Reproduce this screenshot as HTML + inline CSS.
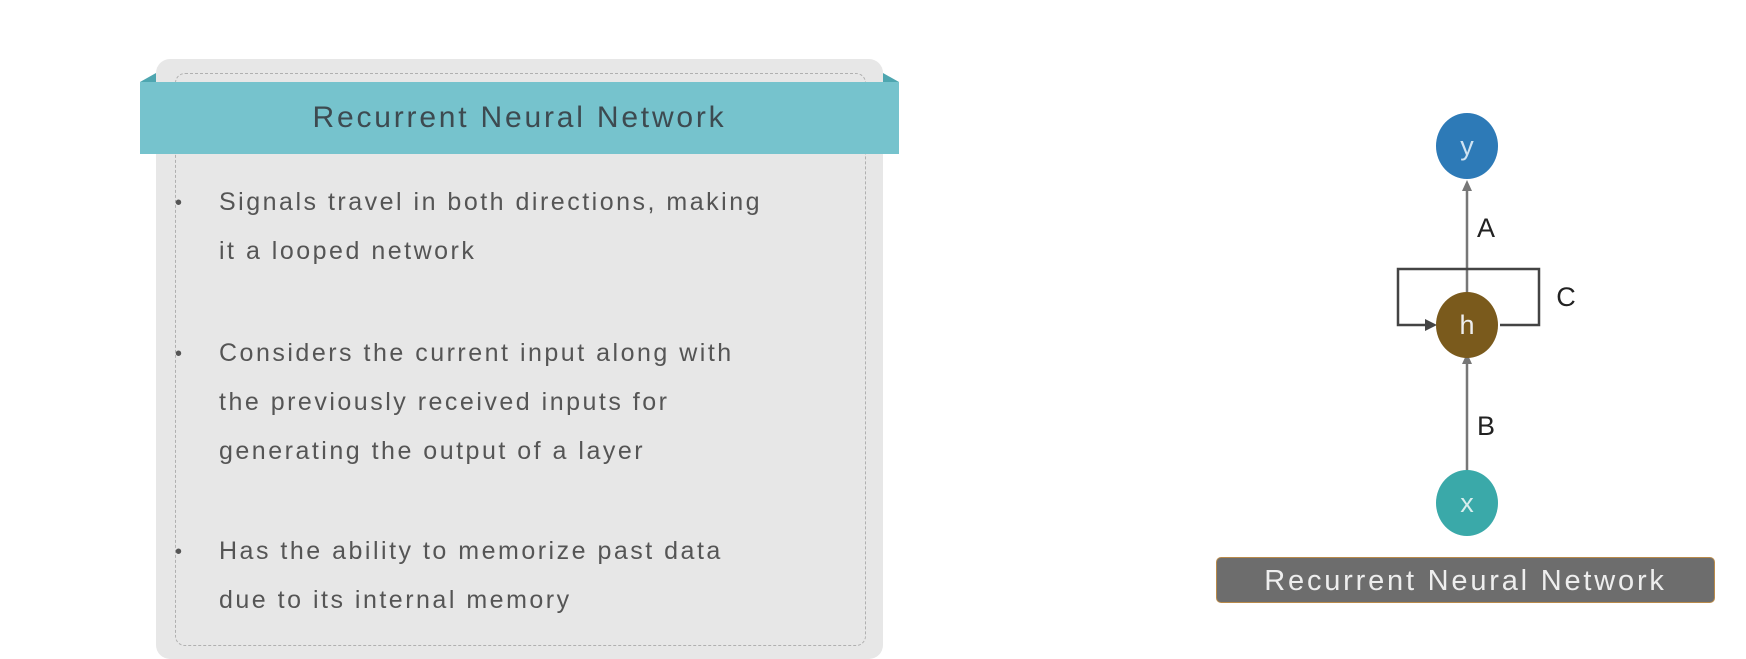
<!DOCTYPE html>
<html><head><style>
body{margin:0;width:1746px;height:652px;background:#fff;position:relative;overflow:hidden;font-family:"Liberation Sans",sans-serif}
.card{position:absolute;left:156px;top:59px;width:727px;height:600px;background:#e7e7e7;border-radius:14px}
.dash{position:absolute;left:175px;top:73px;width:689px;height:571px;border:1.5px dashed #b0b0b0;border-radius:10px}
.fl{position:absolute;left:140px;top:73px;width:0;height:0;border-left:16px solid transparent;border-bottom:9px solid #4ea6b0}
.fr{position:absolute;left:883px;top:73px;width:0;height:0;border-right:16px solid transparent;border-bottom:9px solid #4ea6b0}
.hdr{position:absolute;left:140px;top:82px;width:759px;height:72px;background:#76c3cd;color:#3d4a50;font-size:30px;letter-spacing:2.8px;text-align:center;line-height:72px}
.t{position:absolute;left:219px;color:#555;font-size:25px;letter-spacing:2.5px;line-height:49px}
.b{position:absolute;left:175px;color:#555;font-size:20px}
.lab{position:absolute;left:1216px;top:557px;width:499px;height:46px;background:#6d6d6d;border:1.5px solid #b98a4a;border-radius:5px;color:#eee;font-size:29px;letter-spacing:2.8px;text-align:center;line-height:46px;box-sizing:border-box}
</style></head><body>
<div class="card"></div>
<div class="dash"></div>
<div class="fl"></div><div class="fr"></div>
<div class="hdr">Recurrent Neural Network</div>
<div class="b" style="top:192px">•</div>
<div class="t" style="top:178px">Signals travel in both directions, making<br>it a looped network</div>
<div class="b" style="top:343px">•</div>
<div class="t" style="top:329px">Considers the current input along with<br>the previously received inputs for<br>generating the output of a layer</div>
<div class="b" style="top:541px">•</div>
<div class="t" style="top:527px">Has the ability to memorize past data<br>due to its internal memory</div>
<svg width="1746" height="652" style="position:absolute;left:0;top:0">
<g stroke="#777" stroke-width="2.5" fill="none">
<line x1="1467" y1="190" x2="1467" y2="294"/>
<line x1="1467" y1="362" x2="1467" y2="472"/>
</g>
<polygon points="1467,180 1462,191 1472,191" fill="#777"/>
<polygon points="1467,353 1462,364 1472,364" fill="#777"/>
<path d="M1500,325 H1539 V269 H1398 V325 H1427" stroke="#444" stroke-width="2.5" fill="none"/>
<polygon points="1437,325 1425,319 1425,331" fill="#444"/>
<ellipse cx="1467" cy="146" rx="31" ry="33" fill="#2d7ab7"/>
<ellipse cx="1467" cy="325" rx="31" ry="33" fill="#7a5a1c"/>
<ellipse cx="1467" cy="503" rx="31" ry="33" fill="#3aa9a9"/>
<g font-family="Liberation Sans" font-size="27" text-anchor="middle">
<text x="1467" y="155" fill="#cfe3f2">y</text>
<text x="1467" y="334" fill="#eee">h</text>
<text x="1467" y="512" fill="#d8eeee">x</text>
<text x="1486" y="237" fill="#222">A</text>
<text x="1566" y="306" fill="#222">C</text>
<text x="1486" y="435" fill="#222">B</text>
</g>
</svg>
<div class="lab">Recurrent Neural Network</div>
</body></html>
